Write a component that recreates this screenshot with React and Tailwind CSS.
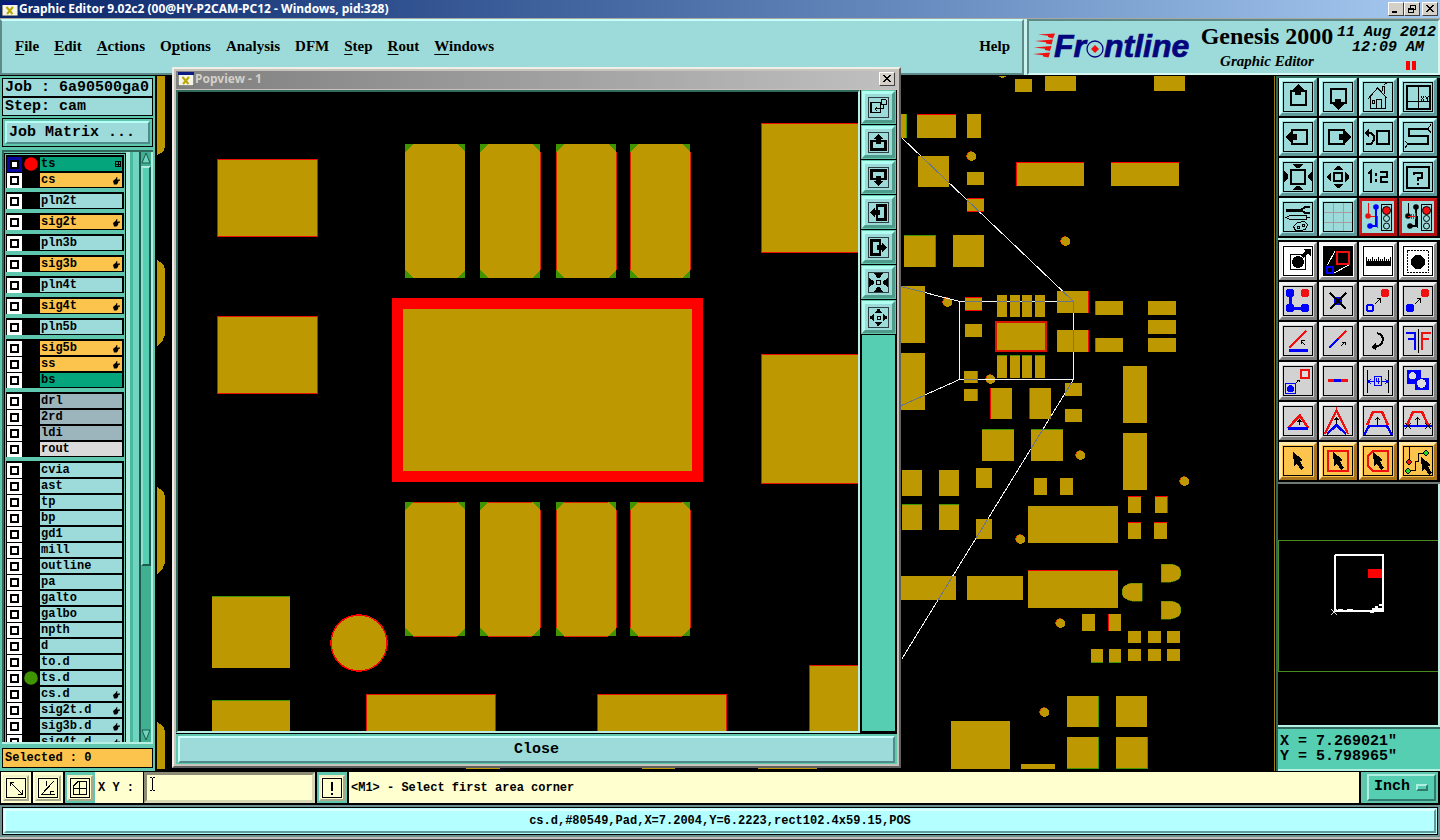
import React from "react";

const MONO = "font-['Liberation_Mono',monospace]";
const SERIF = "font-['Liberation_Serif',serif]";
const GOLD = "#bd9800";
const RED = "#ff0000";
const GREEN = "#3f9400";

/* ---------- board drawing ---------- */

// x1, y1, x2, y2, edges drawn in red, edges drawn in green
const PADS = [
  [895, 114, 907, 138, "", "r"], [917, 114, 956, 138, "t"], [967, 114, 981, 138],
  [1015, 79, 1032, 92], [1045, 76, 1076, 91], [1154, 76, 1185, 91],
  [918, 156, 949, 187], [967, 172, 984, 185], [967, 198, 984, 212, "tb"],
  [1016, 162, 1084, 186, "tl"], [1111, 162, 1179, 186, "t"],
  [904, 235, 936, 267, "", "tr"], [953, 235, 984, 267],
  [895, 286, 925, 343], [895, 353, 925, 410],
  [965, 297, 982, 311, "tb"], [965, 324, 982, 337],
  [997, 295, 1007, 317], [1010, 295, 1020, 317], [1022, 295, 1032, 317], [1035, 295, 1045, 317],
  [997, 355, 1007, 378, "", "t"], [1010, 355, 1020, 378, "", "t"], [1022, 355, 1032, 378, "", "t"], [1035, 355, 1045, 378, "", "t"],
  [1057, 291, 1089, 313, "r"], [1057, 330, 1089, 352, "r"],
  [1095, 301, 1123, 315, "", "l"], [1095, 338, 1123, 352, "", "l"],
  [1148, 301, 1176, 315], [1148, 320, 1176, 334], [1148, 338, 1176, 352],
  [964, 371, 978, 383, "", "r"], [964, 389, 978, 401, "", "r"],
  [990, 388, 1012, 419, "l"], [1029, 388, 1051, 419, "l"],
  [1123, 366, 1147, 423], [1123, 433, 1147, 490],
  [1065, 383, 1082, 396], [1065, 409, 1082, 422],
  [982, 429, 1014, 461, "", "t"], [1031, 429, 1063, 461, "", "t"],
  [902, 470, 922, 496], [939, 470, 959, 496], [902, 504, 922, 530, "", "t"], [939, 504, 959, 530, "", "t"],
  [976, 468, 992, 488], [976, 519, 992, 539],
  [1034, 478, 1047, 495], [1060, 478, 1073, 495],
  [1028, 506, 1118, 543], [1028, 570, 1118, 608, "t"],
  [1128, 496, 1141, 513, "t"], [1155, 496, 1168, 513, "tr"], [1128, 522, 1141, 539, "t"], [1154, 522, 1167, 539, "t"],
  [895, 576, 956, 600], [967, 576, 1023, 600],
  [1082, 614, 1095, 631], [1108, 614, 1121, 631, "l"],
  [1128, 631, 1141, 643], [1148, 631, 1161, 643], [1167, 631, 1180, 643],
  [1128, 649, 1141, 661], [1148, 649, 1161, 661], [1167, 649, 1180, 661],
  [1091, 649, 1103, 663, "", "b"], [1109, 649, 1121, 663, "", "b"],
  [1067, 696, 1099, 727, "", "r"], [1116, 696, 1147, 727],
  [1067, 737, 1099, 769, "", "rb"], [1116, 737, 1148, 769, "", "rb"],
  [951, 721, 1010, 769], [1021, 764, 1055, 769],
  [466, 766, 500, 769], [642, 766, 675, 769], [758, 766, 817, 769],
];
const DOTS = [[1002, 73], [971, 156], [1065, 241], [947, 302], [990, 379], [1080, 455], [1184, 481], [1020, 539], [1060, 623], [1044, 712]];

function Edges({ p, sides = "", color }) {
  const [x1, y1, x2, y2] = p;
  return (
    <>
      {sides.includes("t") && <rect x={x1} y={y1} width={x2 - x1} height="1" fill={color} />}
      {sides.includes("b") && <rect x={x1} y={y2 - 1} width={x2 - x1} height="1" fill={color} />}
      {sides.includes("l") && <rect x={x1} y={y1} width="1" height={y2 - y1} fill={color} />}
      {sides.includes("r") && <rect x={x2 - 1} y={y1} width="1" height={y2 - y1} fill={color} />}
    </>
  );
}
function Pad({ p }) {
  return (
    <g>
      <rect x={p[0]} y={p[1]} width={p[2] - p[0]} height={p[3] - p[1]} fill={GOLD} />
      <Edges p={p} sides={p[4]} color={RED} />
      <Edges p={p} sides={p[5]} color={GREEN} />
    </g>
  );
}
function Guides({ color, clip }) {
  return (
    <g stroke={color} fill="none" clipPath={clip}>
      <path d="M901.500 137.500L1073.500 301.500M901.500 286.500L959.500 301.500M959.500 379.500L901.500 405.500M1073.500 379.500L901.500 659.500" />
      <rect x="959.500" y="301.500" width="114" height="78" />
    </g>
  );
}

function Board() {
  return (
    <svg className="block h-full w-full bg-black" shapeRendering="crispEdges" aria-label="Board view">
      <g transform="translate(-155,-76)">
        <clipPath id="pads">
          {PADS.map((p, i) => <rect key={i} x={p[0]} y={p[1]} width={p[2] - p[0]} height={p[3] - p[1]} />)}
        </clipPath>
        <path d="M157 76h8v71l-2 5l-6 3zM157 260l6 4l2 5v66l-3 7l-5 4zM157 487l6 4l2 5v67l-3 7l-5 4zM157 722l6 4l2 5v38h-8z" fill={GOLD} />
        {PADS.map((p, i) => <Pad key={i} p={p} />)}
        {DOTS.map(([x, y], i) => (
          <g key={i}>
            <circle cx={x} cy={y} r="4.700" fill="#d84000" />
            <circle cx={x + 0.7} cy={y + 0.3} r="4.500" fill={GOLD} />
          </g>
        ))}
        <rect x="996" y="322" width="50" height="29" fill={GOLD} stroke="#d81400" strokeWidth="2" />
        <path d="M1161 564h10q10 1 10 9q0 8 -10 9h-10zM1161 601h10q10 1 10 9q0 8 -10 9h-10zM1142 583h-10q-10 1 -10 9q0 8 10 9h10z" fill={GOLD} stroke={GREEN} strokeWidth="0.5" />
        <Guides color="#f4f4f4" />
        <Guides color="#68748c" clip="url(#pads)" />
      </g>
    </svg>
  );
}

const TALL_X = [405, 480, 556, 630];
function Chamfer({ x, y, lower }) {
  return (
    <g>
      <rect x={x} y={y} width="60" height="134" fill="#3f9400" />
      <path
        d={`M${x + 8} ${y}h44l8 8v118l-8 8h-44l-8 -8v-118z`}
        fill={GOLD}
      />
      {lower && <path d={`M${x + 8} ${y + 0.5}h44M${x + 8} ${y + 134.5}h44`} stroke="#e02000" />}
      {x > 540 && <path d={`M${x + 0.5} ${y + 8}v118`} stroke="#e02000" />}
      {x > 470 && <path d={`M${x + 60.5} ${y + 8}v118`} stroke="#e02000" />}
    </g>
  );
}
function PopBoard() {
  const outlined = [
    [217, 159, 101, 78], [217, 316, 101, 78], [761, 123, 110, 130], [761, 354, 110, 130],
    [366, 694, 130, 50], [597, 694, 130, 50], [809, 665, 60, 80],
  ];
  return (
    <svg className="block h-full w-full bg-black" shapeRendering="crispEdges" aria-label="Magnified view">
      <g transform="translate(-178,-92)">
        {outlined.map(([x, y, w, h], i) => (
          <g key={i}>
            <rect x={x} y={y} width={w} height={h} fill="#e81000" />
            <rect x={x + 1} y={y + 1} width={w - 2} height={h - 2} fill={GOLD} />
          </g>
        ))}
        {TALL_X.map((x) => <Chamfer key={x} x={x} y={144} />)}
        {TALL_X.map((x) => <Chamfer key={x} x={x} y={502} lower />)}
        <rect x="392" y="298" width="311" height="184" fill={RED} />
        <rect x="403" y="309" width="289" height="162" fill={GOLD} />
        <rect x="212" y="596" width="78" height="72" fill={GOLD} />
        <rect x="212" y="596" width="78" height="1" fill={GREEN} />
        <rect x="212" y="700" width="78" height="40" fill={GOLD} />
        <rect x="212" y="700" width="78" height="1" fill={GREEN} />
        <circle cx="359" cy="643" r="28" fill={GOLD} stroke={RED} strokeWidth="1.500" />
      </g>
    </svg>
  );
}

/* ---------- icons ---------- */

const BLUE = "#0000ff";
const R = "#f01010";
const K = "#000";

function Icon({ size = 30, children, frame = true }) {
  return (
    <svg width={size} height={size} viewBox="0 0 30 30" fill="none" shapeRendering="crispEdges" aria-hidden="true">
      {frame && <rect x="0.500" y="0.500" width="29" height="29" stroke={K} />}
      {children}
    </svg>
  );
}
const arrowUp = <path d="M15 2l6 6h-3v5h-6v-5h-3z" fill={K} />;
const Tri = ({ d }) => <path d={d} fill={K} />;
const cursor = <path d="M10 6L20 14L17 15.500L21 22L18 24L13.800 17.500L11 20z" fill={K} />;
const miniArrow = <path d="M11.500 18.500L17 13M13.500 12.500h4v4" stroke={K} />;

const VIEW_ICONS = [
  ["Pan up", <Icon><rect x="8" y="9" width="15" height="14" stroke={K} strokeWidth="2" />{arrowUp}</Icon>],
  ["Pan down", <Icon><rect x="8" y="7" width="15" height="14" stroke={K} strokeWidth="2" /><Tri d="M15 28l6-6h-3v-5h-6v5h-3z" /></Icon>],
  ["Home", <Icon><path d="M5 17L14.500 6L24 16M7.500 15v11.500h14.500v-12M13.500 26v-9h5v9M9.500 18.500h2v3h-2zM19.500 9v-4.500h2v7M21 3l2-2h1" stroke={K} /></Icon>],
  ["Set XY", <Icon><rect x="4" y="4" width="23" height="23" stroke={K} strokeWidth="2" /><path d="M15.500 4v23M4 19.500h23M18 14.500l3 4M21 14.500l-3 4M22.500 14.500l1.500 2l1.500-2M24 16.500v2" stroke={K} /></Icon>],
  ["Pan left", <Icon><rect x="9" y="8" width="15" height="14" stroke={K} strokeWidth="2" /><Tri d="M2 15l6-6v3h6v6h-6v3z" /></Icon>],
  ["Pan right", <Icon><rect x="6" y="8" width="15" height="14" stroke={K} strokeWidth="2" /><Tri d="M28 15l-6-6v3h-6v6h6v3z" /></Icon>],
  ["Previous view", <Icon><rect x="14" y="9" width="12" height="13" stroke={K} strokeWidth="2" /><path d="M4 11h4l3 3v4l-3 4h-5" stroke={K} strokeWidth="2" /><Tri d="M1 11l5-5v10z" /></Icon>],
  ["Serpentine", <Icon><path d="M25 7h-19v7h19v8h-20" stroke={K} strokeWidth="2" /><path d="M25 6.500l3-4M25 7.500l3 3M5 22l-3-3M5 22l-3 4" stroke={K} /></Icon>],
  ["Zoom in", <Icon><rect x="8" y="8" width="14" height="14" stroke={K} strokeWidth="2" /><Tri d="M9 2h11l-4 4h-3zM9 28h11l-4-4h-3zM1 9v11l4-4v-3zM29 9v11l-4-4v-3z" /></Icon>],
  ["Zoom out", <Icon><rect x="11" y="11" width="8" height="8" stroke={K} strokeWidth="2" /><Tri d="M10 8h10l-4-4h-2zM10 22h10l-4 4h-2zM8 10v10l-4-4v-2zM22 10v10l4-4v-2z" /></Icon>],
  ["Scale 1:2", <Icon><path d="M5 12l3-3v12M13 11v3M13 17v3M17 10h7v5h-6v5h7" stroke={K} strokeWidth="2" /></Icon>],
  ["Help query", <Icon><rect x="4" y="5" width="22" height="21" stroke={K} strokeWidth="2" /><path d="M11 13v-2h8v5h-4v3M15 21v2" stroke={K} strokeWidth="2" /></Icon>],
  ["Tools", <Icon><path d="M3 8h15" stroke={K} strokeWidth="3" /><path d="M27 5h-5l-4 3l4 3h5" stroke={K} strokeWidth="2" /><path d="M3 15.500l4-2h16v4h-16zM23 15.500h4M14.500 20.500l7-1l3 3l-2 5l-5 1l-5 0l-2-4zM14 24h2v2h-2zM19 22h2v2h-2z" stroke={K} /></Icon>],
  ["Grid", <Icon><path d="M10.500 1v28M20.500 1v28M1 10.500h28M1 20.500h28" stroke="#a99aa0" /></Icon>],
];

function Lights({ a, b }) {
  return (
    <>
      <path d="M5.500 1v13h9v12" stroke={a} />
      <path d="M13 5v19h-6" stroke={b} strokeWidth="1.500" />
      <g shapeRendering="auto"><circle cx="5" cy="14" r="2.800" fill={a} /><circle cx="13" cy="5" r="2.800" fill={b} /><circle cx="7" cy="24" r="2.800" fill={b} /></g>
      <rect x="18.500" y="2.500" width="10" height="26" stroke={K} />
      <g shapeRendering="auto"><circle cx="23.500" cy="8.500" r="4" fill={R} stroke={K} /><circle cx="23.500" cy="16.500" r="3" stroke={K} /><circle cx="23.500" cy="24" r="3" stroke={K} /></g>
    </>
  );
}
const ALERT_ICONS = [
  ["Net check", <Icon frame={false}><Lights a={R} b={BLUE} /></Icon>],
  ["Spacing check", <Icon frame={false}><Lights a={K} b={K} /><path d="M5 14.500h8M8.500 12v5M10.500 12v5M12.500 11v6" stroke={R} /></Icon>],
];

const WHITE_ICONS = [
  ["Move origin", <Icon><rect x="7.500" y="8.500" width="15" height="15" stroke={K} /><circle cx="15" cy="16" r="6" fill={K} /><path d="M19 11l6-6" stroke={K} strokeWidth="3" /><Tri d="M20 3h8v8z" /></Icon>],
  ["Popview", <Icon frame={false}><rect width="30" height="30" fill={K} /><rect x="14" y="6" width="12" height="12" stroke={R} strokeWidth="2" /><rect x="4" y="21" width="6" height="6" stroke={BLUE} strokeWidth="2" /><path d="M4.500 19L12 5M11 27L26 19" stroke="#fff" /></Icon>],
  ["Measure", <Icon><Tri d="M3 15h25v5h-25z" /><path d="M3.500 11v5M5.500 13v3M7.500 13v3M9.500 11v5M11.500 13v3M13.500 13v3M15.500 11v5M17.500 13v3M19.500 13v3M21.500 11v5M23.500 13v3M25.500 13v3M27.500 11v5" stroke={K} /></Icon>],
  ["Select area", <Icon><rect x="4.500" y="4.500" width="21" height="22" stroke={K} strokeDasharray="2 1" /><circle cx="15" cy="16" r="7" fill={K} /></Icon>],
];

const trapezoid = <path d="M4 19L10 6H19L25 19" stroke={R} strokeWidth="2.500" />;
const upMini = <path d="M14.500 19v-7M12 14l2.500-2.500L17 14" stroke={K} />;
const EDIT_ICONS = [
  ["Add net", <Icon><path d="M7 7v15h15" stroke={BLUE} strokeWidth="3" /><g fill={BLUE}><circle cx="7" cy="7" r="4.500" /><circle cx="7" cy="22" r="4.500" /><circle cx="22" cy="22" r="4.500" /></g><circle cx="22" cy="7" r="4.500" fill={R} /></Icon>],
  ["Delete", <Icon><circle cx="15" cy="15" r="4.500" fill={BLUE} /><path d="M7 7l16 16M23 7L7 23" stroke={K} strokeWidth="1.500" /></Icon>],
  ["Move", <Icon><circle cx="7" cy="22" r="3.500" stroke={BLUE} strokeWidth="2" /><circle cx="22" cy="7" r="4.500" fill={R} />{miniArrow}</Icon>],
  ["Copy", <Icon><circle cx="7" cy="22" r="4.500" fill={BLUE} /><circle cx="22" cy="7" r="4.500" fill={R} />{miniArrow}</Icon>],
  ["Rotate line", <Icon><path d="M6 22L23 5" stroke={R} strokeWidth="2.500" /><path d="M6 24h19" stroke={BLUE} strokeWidth="3" /><path d="M22 19l-4-4M18.500 18v-3.500h3.500" stroke={K} /></Icon>],
  ["Extend line", <Icon><path d="M6 22L15 13" stroke={BLUE} strokeWidth="2.500" /><path d="M15 13L23 5" stroke={R} strokeWidth="2.500" /><path d="M18 20l4-4M18.500 16h3.500v3" stroke={K} /></Icon>],
  ["Rotate", <Icon><path d="M14 7q7 2 5.500 8q-1 5-8 6" stroke={K} strokeWidth="2" /><Tri d="M8 21l5-4v7z" /></Icon>],
  ["Mirror", <Icon><path d="M3 7h9v17M5 13h7" stroke={BLUE} strokeWidth="2.500" /><path d="M15.500 3v24" stroke={K} /><path d="M28 7h-9v17M26 13h-7" stroke={R} strokeWidth="2.500" /></Icon>],
  ["Substitute", <Icon><rect x="2.500" y="17.500" width="10" height="10" stroke={BLUE} /><circle cx="7.500" cy="22.500" r="3.500" fill={BLUE} /><rect x="17" y="3" width="10" height="10" fill={R} /><circle cx="22" cy="8" r="3.500" fill="#ddd" /><path d="M13 17l3-3M14 14h2v2" stroke={K} /></Icon>],
  ["Break line", <Icon><path d="M5 14.500h20" stroke={R} strokeWidth="3" /><path d="M11 14.500h7" stroke={BLUE} strokeWidth="3" /></Icon>],
  ["Stretch", <Icon><path d="M4.500 4v23M25.500 4v23" stroke={K} /><path d="M5 15.500h6M19 15.500h6M8 13l-3 2.500l3 2.500M22 13l3 2.500l-3 2.500M11.500 10.500h7v9h-7zM13.500 12v3h3M15.500 12v6" stroke={BLUE} /></Icon>],
  ["Merge", <Icon><rect x="4" y="4" width="14" height="14" fill={BLUE} /><rect x="12" y="12" width="14" height="12" fill={BLUE} /><circle cx="9.500" cy="9.500" r="3.500" fill="#ddd" /><circle cx="18.500" cy="17.500" r="4.500" fill="#ddd" /></Icon>],
  ["Triangle", <Icon><path d="M5 22L17 9.500L25 22" stroke={R} strokeWidth="2.500" /><path d="M5 22.500h20" stroke={BLUE} strokeWidth="3" /><path d="M16.500 19v-5M14.500 16l2-2l2 2" stroke={K} /></Icon>],
  ["Chevron", <Icon><path d="M2 28L13.500 4L25 28" stroke={R} strokeWidth="2.200" /><path d="M4 28L13.500 19L23 28" stroke={BLUE} strokeWidth="2.500" /><path d="M13.500 18v-6M11.500 14l2-2l2 2" stroke={K} /></Icon>],
  ["Trapezoid", <Icon><path d="M1 29L6 20H24L29 29" stroke={BLUE} strokeWidth="2.500" />{trapezoid}{upMini}</Icon>],
  ["Trapezoid cut", <Icon><path d="M1 20h28" stroke={BLUE} strokeWidth="2.500" />{trapezoid}{upMini}<path d="M2 17l6 6M8 17l-6 6M22 17l6 6M28 17l-6 6" stroke={K} /></Icon>],
];
const SELECT_ICONS = [
  ["Select", <Icon>{cursor}</Icon>],
  ["Select rectangle", <Icon><rect x="5" y="5" width="20" height="20" stroke={R} strokeWidth="2" />{cursor}</Icon>],
  ["Select polygon", <Icon><path d="M10 5h15v20h-15l-5-5v-10z" stroke={R} strokeWidth="2" />{cursor}</Icon>],
  ["Select net", <Icon><path d="M6.500 1v15M6 24.500h6v-9h3v-8h8" stroke={K} /><circle cx="6" cy="16" r="2.300" fill={R} stroke={K} /><circle cx="5" cy="25" r="2.300" fill="#20d820" stroke={K} /><circle cx="23" cy="7" r="2.300" fill="#20d820" stroke={K} /><g transform="translate(8,5)">{cursor}</g></Icon>],
];
const POP_ICONS = [
  ["Link view", <Icon size={21}><rect x="4" y="8" width="14" height="14" stroke={K} strokeWidth="2.500" /><path d="M19 4h7v7h-7zM22.500 11v6h-12M13 14l-3 3l3 3" stroke={K} strokeWidth="1.400" /></Icon>],
  ["Pop pan up", <Icon size={21}><rect x="5" y="13" width="20" height="12" stroke={K} strokeWidth="3" /><Tri d="M15 3l7 7h-3v7h-8v-7h-3z" /></Icon>],
  ["Pop pan down", <Icon size={21}><rect x="5" y="5" width="20" height="12" stroke={K} strokeWidth="3" /><Tri d="M15 27l7-7h-3v-7h-8v7h-3z" /></Icon>],
  ["Pop pan left", <Icon size={21}><rect x="13" y="5" width="12" height="20" stroke={K} strokeWidth="3" /><Tri d="M3 15l7-7v3h7v8h-7v3z" /></Icon>],
  ["Pop pan right", <Icon size={21}><rect x="5" y="5" width="12" height="20" stroke={K} strokeWidth="3" /><Tri d="M27 15l-7-7v3h-7v8h7v3z" /></Icon>],
  ["Pop zoom in", <Icon size={21}><rect x="12" y="12" width="6" height="6" stroke={K} strokeWidth="2.500" /><Tri d="M9 2h12l-4 6h-4zM9 28h12l-4-6h-4zM2 9v12l6-4v-4zM28 9v12l-6-4v-4z" /></Icon>],
  ["Pop zoom out", <Icon size={21}><rect x="13" y="13" width="5" height="5" stroke={K} strokeWidth="1.500" /><Tri d="M10 8h10l-4-5h-2zM10 22h10l-4 5h-2zM8 10v10l-5-4v-2zM22 10v10l5-4v-2z" /></Icon>],
];

const TONES = {
  teal: "bg-[#9cdbda] border-t-[#c8fffb] border-l-[#c8fffb] border-r-[#5e9b9a] border-b-[#5e9b9a]",
  alert: "bg-[#9cdbda] border-t-[#d01818] border-l-[#d01818] border-r-[#b01010] border-b-[#b01010]",
  white: "bg-white border-t-[#f4f4f4] border-l-[#f4f4f4] border-r-[#8a8a8a] border-b-[#8a8a8a]",
  gray: "bg-[#d2d2d2] border-t-[#f2f2f2] border-l-[#f2f2f2] border-r-[#808080] border-b-[#808080]",
  orange: "bg-[#fcc44c] border-t-[#ffe8a8] border-l-[#ffe8a8] border-r-[#a8741c] border-b-[#a8741c]",
};
function Tool({ label, tone, children }) {
  return (
    <button type="button" aria-label={label} className={`flex size-[38px] items-center justify-center border-[3px] ${TONES[tone]}`}>
      {children}
    </button>
  );
}
const tools = (list, tone) => list.map(([label, icon]) => <Tool key={label} label={label} tone={tone}>{icon}</Tool>);

function WindowIcon() {
  return (
    <svg width="16" height="14" viewBox="0 0 16 14" aria-hidden="true">
      <rect width="16" height="14" fill="#f4f4e8" stroke="#333" />
      <rect width="16" height="3" fill="#0a1a80" />
      <path d="M4.500 5l6 7M11 5l-6 7" stroke="#b8a800" strokeWidth="2" />
    </svg>
  );
}
function WinButton({ label, children }) {
  return (
    <button type="button" aria-label={label} className="flex h-[14px] w-4 items-center justify-center border border-t-white border-l-white border-r-[#404040] border-b-[#404040] bg-[#d4d0c8]">
      <svg width="10" height="10" viewBox="0 0 10 10" fill="none" stroke="#000" shapeRendering="crispEdges">{children}</svg>
    </button>
  );
}

/* ---------- header ---------- */

const MENUS = [["", "F", "ile"], ["", "E", "dit"], ["", "A", "ctions"], ["O", "p", "tions"], ["Analysis", "", ""], ["DFM", "", ""], ["", "S", "tep"], ["", "R", "out"], ["", "W", "indows"]];

function Logo() {
  return (
    <svg width="164" height="34" viewBox="0 0 164 34" role="img" aria-label="Frontline" className="shrink-0">
      <g fill={R}>
        <path d="M5 4.500L22 3.500L20 8.500L15 7V5.800zM2 11L20 9.500L18.500 14.500L13 13.500V12.300zM1 17.500L18.500 16L17 21L12 20V18.800zM0 24L17 22.500L15.500 27.500L10 26.500V25.300z" />
      </g>
      <g fill="#05057e" stroke="#05057e" strokeWidth="0.700" className="font-['Liberation_Sans',sans-serif] text-[32px] font-bold italic">
        <text x="21" y="27">Fr</text>
        <text x="71" y="27">ntline</text>
      </g>
      <circle cx="62" cy="19" r="8" fill="none" stroke="#05057e" strokeWidth="1.300" />
      <path d="M62 15l4 4l-4 4l-4-4z" fill={R} />
    </svg>
  );
}

function Header() {
  return (
    <header className="flex h-[56px] shrink-0 gap-[3px] bg-[#c8f4f0]">
      <nav className={`flex flex-1 items-center gap-[15px] border-2 border-t-[#c8fffb] border-l-[#5e8b8a] border-r-[#5e8b8a] border-b-[#5e8b8a] bg-[#9cdbda] pr-3 pb-0.5 pl-[13px] text-[15px] font-bold ${SERIF}`}>
        {MENUS.map(([a, b, c]) => (
          <button type="button" key={a + b + c} className="whitespace-nowrap underline-offset-[3px]">
            {a}<span className="underline">{b}</span>{c}
          </button>
        ))}
        <button type="button" className="ml-auto">Help</button>
      </nav>
      <div className="flex w-[413px] shrink-0 items-center justify-between border-2 border-t-[#5e8b8a] border-l-[#5e8b8a] border-r-[#d8f8f4] border-b-[#d8f8f4] bg-[#9cdbda] pr-0.5 pl-1">
        <Logo />
        <div className={`flex flex-col items-center font-bold whitespace-nowrap ${SERIF}`}>
          <h1 className="text-2xl leading-7">Genesis 2000</h1>
          <p className="text-[15px] leading-[22px] italic">Graphic Editor</p>
        </div>
        <div className={`flex flex-col items-end self-start pt-1 text-[15px] leading-[15px] font-bold italic whitespace-nowrap ${MONO}`}>
          <time>11 Aug 2012</time>
          <span className="pr-3">12:09 AM</span>
          <svg width="10" height="9" className="mt-1.5 mr-5" aria-hidden="true"><path d="M0 0h4v9h-4zM6 0h4v9h-4z" fill={RED} /></svg>
        </div>
      </div>
    </header>
  );
}

/* ---------- layer list ---------- */

const LAYER_BG = {
  green: "bg-[#04a47c]", orange: "bg-[#fcc44c]", blue: "bg-[#9cdbda]", slate: "bg-[#9cb4bc]", light: "bg-[#dadada]",
};
const GROUPS = [
  [["ts", "green", "grid", "red"], ["cs", "orange", "hand"]],
  [["pln2t", "blue"]], [["sig2t", "orange", "hand"]],
  [["pln3b", "blue"]], [["sig3b", "orange", "hand"]],
  [["pln4t", "blue"]], [["sig4t", "orange", "hand"]],
  [["pln5b", "blue"]],
  [["sig5b", "orange", "hand"], ["ss", "orange", "hand"], ["bs", "green"]],
  [["drl", "slate"], ["2rd", "slate"], ["ldi", "slate"], ["rout", "light"]],
  [["cvia", "blue"], ["ast", "blue"], ["tp", "blue"], ["bp", "blue"], ["gd1", "blue"], ["mill", "blue"], ["outline", "blue"], ["pa", "blue"], ["galto", "blue"], ["galbo", "blue"], ["npth", "blue"], ["d", "blue"], ["to.d", "blue"], ["ts.d", "blue", "", "green"], ["cs.d", "blue", "hand"], ["sig2t.d", "blue", "hand"], ["sig3b.d", "blue", "hand"], ["sig4t.d", "blue", "hand"]],
];

function Layer({ name, tone, mark, dot }) {
  return (
    <li className="flex h-4 items-center bg-black pr-0.5 pl-px">
      <input
        type="checkbox"
        aria-label={name}
        className={`size-[15px] appearance-none border-[3px] bg-white shadow-[inset_0_0_0_2px_#000] ${name === "ts" ? "border-[#0808a0]" : "border-white"}`}
      />
      <span className="flex w-[18px] justify-center">
        {dot && (
          <svg width="14" height="14" aria-hidden="true"><circle cx="7" cy="7" r="6.800" fill={dot === "red" ? RED : GREEN} /></svg>
        )}
      </span>
      <button type="button" className={`flex h-[14px] min-w-0 flex-1 items-center justify-between px-px text-[12px] leading-[14px] font-bold ${MONO} ${LAYER_BG[tone]}`}>
        {name}
        {mark === "hand" && (
          <svg width="9" height="9" viewBox="0 0 9 9" aria-hidden="true"><path d="M1 5L4 2.500L4.500 1L5.500 1.500L5 3.500H8V4.800H6.500L6 7L4.500 8.500H2z" fill={K} /></svg>
        )}
        {mark === "grid" && (
          <svg width="6" height="6" viewBox="0 0 6 6" shapeRendering="crispEdges" aria-hidden="true"><path d="M0.500 0.500h5v5h-5zM3 0v6M0 3h6" fill="none" stroke={K} /></svg>
        )}
      </button>
    </li>
  );
}

function Sidebar() {
  return (
    <aside className={`flex w-[155px] shrink-0 flex-col bg-[#5fc7ae] p-0.5 pb-[3px] font-bold ${MONO}`}>
      <div className="border border-black bg-[#9cdbda] px-0.5 text-[15px] leading-[17px] whitespace-nowrap">Job : 6a90500ga0</div>
      <div className="border border-black bg-[#9cdbda] px-0.5 text-[15px] leading-[17px] whitespace-nowrap">Step: cam</div>
      <div className="mt-0.5 border border-black p-0.5">
        <button type="button" className="block w-full border-2 border-t-[#b8fff8] border-l-[#b8fff8] border-r-[#4e8b8a] border-b-[#4e8b8a] bg-[#9cdbda] px-0.5 text-left text-[15px] leading-[19px] font-bold">Job Matrix ...</button>
      </div>
      <div className="mt-[3px] flex min-h-0 flex-1 border-t-2 border-b-2 border-t-[#2f6a5c] border-b-[#b8f0e4]">
        <div className="flex min-h-0 flex-1 border-l-2 border-[#2f6a5c]">
          <ul className="mt-px flex flex-1 flex-col gap-1 overflow-hidden border border-b-0 border-black p-px">
            {GROUPS.map((group, i) => (
              <li key={i} className="shrink-0">
                <ul className="border-t border-black">
                  {group.map(([name, tone, mark, dot]) => <Layer key={name} name={name} tone={tone} mark={mark} dot={dot} />)}
                </ul>
              </li>
            ))}
          </ul>
        </div>
        <div className="w-[13px] border-r-[6px] border-l-4 border-r-[#70d4be] border-l-[#b0ece0] bg-[#4ab89c]" />
        <div className="flex w-[14px] flex-col border-r-2 border-l-2 border-r-[#b0ece0] border-l-[#1f5a50] bg-[#40b090]">
          <svg width="10" height="14" viewBox="0 0 10 14" aria-hidden="true"><path d="M5 1L9 11H1z" fill="#70d4be" stroke="#1f5a50" /></svg>
          <div className="h-[400px] border-2 border-t-[#b0ece0] border-l-[#90e0d0] border-r-[#1f5a50] border-b-[#1f5a50] bg-[#55ceb2]" />
          <svg width="10" height="14" viewBox="0 0 10 14" className="mt-auto" aria-hidden="true"><path d="M5 12L9 2H1z" fill="#70d4be" stroke="#1f5a50" /></svg>
        </div>
      </div>
      <div className="mt-1 border border-black bg-[#fcc44c] px-0.5 text-[12px] leading-[18px]">Selected : 0</div>
    </aside>
  );
}

/* ---------- right panel ---------- */

function RightPanel() {
  return (
    <aside className="flex w-[166px] shrink-0 flex-col border-l border-l-[#a07c10] bg-black pl-px">
      <div className="flex flex-1 flex-col border-l-2 border-[#2f6a5c]">
        <div className="grid grid-cols-[repeat(4,38px)] gap-0.5 border-t-2 border-b-2 border-t-[#2f6a5c] border-b-[#b8f0e4] pb-0.5 pl-px">
          {tools(VIEW_ICONS, "teal")}
          {tools(ALERT_ICONS, "alert")}
        </div>
        <div className="grid grid-cols-[repeat(4,38px)] gap-0.5 border-b-2 border-[#707878] pt-0.5 pb-0.5 pl-px">
          {tools(WHITE_ICONS, "white")}
          {tools(EDIT_ICONS, "gray")}
          {tools(SELECT_ICONS, "orange")}
        </div>
        <div className="min-h-0 flex-1 border-r-2 border-b-2 border-[#b8f0e4]">
          <svg className="block h-full w-full" shapeRendering="crispEdges" aria-label="Board overview">
            <rect x="0.500" y="56.500" width="200" height="131" fill="none" stroke="#4a8c1c" />
            <path d="M57 70.500h48M104.500 70v58M56.500 71v56M57 127h48M57 76v6M57 102v3M57 113v4M60 125.500h5M69 125.500h6M92 128h4M94 124.500h11M97 122.500h3M101 121h4" stroke="#fff" strokeWidth="2" fill="none" />
            <path d="M53 125l6 6M59 125l-6 6" stroke="#ddd" />
            <rect x="90" y="85" width="14" height="9" fill={RED} />
          </svg>
        </div>
        <div className={`border-t-2 border-b-2 border-t-[#2f6a5c] border-b-[#b8f0e4] bg-[#55ceb2] px-0.5 py-[5px] text-[15px] leading-[15px] font-bold ${MONO}`}>
          <p>X = 7.269021"</p>
          <p>Y = 5.798965"</p>
        </div>
      </div>
    </aside>
  );
}

/* ---------- popview ---------- */

function Popview() {
  return (
    <section className="absolute top-[67px] left-[172px] flex h-[701px] w-[729px] flex-col border-2 border-t-[#f0eee8] border-l-[#f0eee8] border-r-[#606060] border-b-[#606060] bg-[#c8c4bc] p-0.5">
      <div className="flex h-[18px] shrink-0 items-center gap-px bg-linear-to-r from-[#808080] to-[#c0c0c0] px-0.5 pb-0.5">
        <WindowIcon />
        <h2 className="flex-1 font-['Noto_Sans',sans-serif] text-[12px] leading-4 font-bold text-[#d4d0c8]">Popview - 1</h2>
        <WinButton label="Close popview"><path d="M2 1l6 7M8 1L2 8" strokeWidth="1.500" /></WinButton>
      </div>
      <div className="mt-px flex min-h-0 flex-1">
        <div className="min-w-0 flex-1 border-2 border-t-[#2f6a5c] border-l-[#2f6a5c] border-r-[#b8f0e4] border-b-[#b8f0e4]">
          <PopBoard />
        </div>
        <div className="flex w-[37px] flex-col items-center gap-px border-2 border-t border-black bg-[#55ceb2]">
          {POP_ICONS.map(([label, icon]) => (
            <div key={label} className="w-full border-b border-black pb-px">
              <button type="button" aria-label={label} className="flex h-8 w-full items-center justify-center border-3 border-t-[#b0fff0] border-l-[#b0fff0] border-r-[#4e9b8a] border-b-[#4e9b8a] bg-[#9cdbda] outline outline-[#5fc7ae]">
                {icon}
              </button>
            </div>
          ))}
        </div>
      </div>
      <div className="border-t border-black bg-[#5fc7ae] p-0.5 pb-px">
        <button type="button" className={`block w-full border-2 border-t-[#c8fffb] border-l-[#c8fffb] border-r-[#4e8b8a] border-b-[#4e8b8a] bg-[#9cdbda] pt-px text-[15px] leading-[22px] ${MONO} font-bold`}>Close</button>
      </div>
    </section>
  );
}

/* ---------- bottom bars ---------- */

function CmdButton({ label, teal, children }) {
  return (
    <button
      type="button"
      aria-label={label}
      className={`flex w-[30px] shrink-0 items-center justify-center ${teal ? "bg-[#5fc7ae]" : "bg-[#ffffd0]"}`}
    >
      <span className="flex size-[26px] items-center justify-center border-2 border-t-[#f0f0c8] border-l-[#f0f0c8] border-r-[#a8a88c] border-b-[#a8a88c] bg-[#ffffd0]">
        <svg width="20" height="20" viewBox="0 0 20 20" fill="none" stroke="#000" shapeRendering="crispEdges" aria-hidden="true">
          <rect x="0.500" y="0.500" width="19" height="19" />
          {children}
        </svg>
      </span>
    </button>
  );
}

function CommandBar() {
  return (
    <div className={`flex h-[34px] shrink-0 gap-0.5 bg-black pt-px pr-0.5 pb-0.5 pl-px text-[12px] font-bold ${MONO}`}>
      <CmdButton label="Relative"><path d="M4 4l12 12M4 8v-4h4M16 12v4h-4" /></CmdButton>
      <CmdButton label="Angle"><path d="M3 17L16 3M3 16.500h14M8 3v5M12 13h4M12 13v3" /></CmdButton>
      <CmdButton label="Snap grid" teal><path d="M3.500 17V8l5-4.500h8V16.500h-13M3 10.500h14M9.500 3v14" strokeWidth="1.500" /></CmdButton>
      <label htmlFor="xy" className="-ml-0.5 flex w-12 items-center bg-[#ffffd0] pl-[3px] whitespace-pre">X Y :</label>
      <input id="xy" className="-ml-px w-[171px] border-[3px] border-t-[#8c8c74] border-l-[#8c8c74] border-r-[#d8d8b4] border-b-[#d8d8b4] bg-[#ffffd0] px-1 outline-none" />
      <CmdButton label="Confirm" teal><path d="M10 4v9M10 15v2" strokeWidth="2" /></CmdButton>
      <output className="flex flex-1 items-center bg-[#ffffd0] pl-0.5">&lt;M1&gt; - Select first area corner</output>
      <div className="flex w-[77px] bg-[#5fc7ae] py-0.5 pr-0.5 pl-1.5">
        <div className="relative flex flex-1 items-center border-2 border-t-[#b0f0e0] border-l-[#b0f0e0] border-r-[#2f7a6c] border-b-[#2f7a6c] bg-[#55ceb2]">
          <select aria-label="Units" className={`w-full appearance-none pl-[5px] text-[15px] font-bold ${MONO}`}>
            <option>Inch</option>
          </select>
          <span className="pointer-events-none absolute right-1.5 h-[7px] w-3 border-2 border-t-[#b0f0e0] border-l-[#b0f0e0] border-r-[#2f7a6c] border-b-[#2f7a6c]" />
        </div>
      </div>
      <svg width="7" height="17" viewBox="0 0 7 17" className="pointer-events-none absolute mt-1 ml-[148px]" fill="none" stroke="#000" shapeRendering="crispEdges" aria-hidden="true"><path d="M1 1.500h2M4 1.500h2M3.500 2v12M1 14.500h2M4 14.500h2" /></svg>
    </div>
  );
}

export default function App() {
  return (
    <div className="relative flex h-screen min-h-[600px] flex-col overflow-hidden bg-black text-black">
      <div className="flex h-[18px] shrink-0 items-center gap-px bg-linear-to-r from-[#0a246a] to-[#a6caf0] px-0.5">
        <WindowIcon />
        <p className="flex-1 font-['Noto_Sans',sans-serif] text-[12px] leading-4 font-bold text-white">Graphic Editor 9.02c2 (00@HY-P2CAM-PC12 - Windows, pid:328)</p>
        <div className="flex">
          <WinButton label="Minimize"><path d="M1 8h5" strokeWidth="2" /></WinButton>
          <WinButton label="Restore"><path d="M3.500 4V1.500h5v4H7M1.500 4.500h5v4h-5zM1 5.500h6" /></WinButton>
          <span className="w-0.5" />
          <WinButton label="Close window"><path d="M2 1l6 7M8 1L2 8" strokeWidth="1.500" /></WinButton>
        </div>
      </div>
      <div className="h-px shrink-0 bg-[#a8a8a0]" />
      <Header />
      <main className="flex min-h-0 flex-1 border-t border-black">
        <Sidebar />
        <div className="min-w-0 flex-1"><Board /></div>
        <RightPanel />
      </main>
      <CommandBar />
      <footer className={`flex h-[32px] shrink-0 border-2 border-[#6f9090] bg-[#b4ffff] text-[12px] font-bold ${MONO}`}>
        <p className="flex-1 border border-black p-px">
          <span className="flex h-full items-center justify-center border-2 border-t-[#e0ffff] border-l-[#e0ffff] border-r-[#5e9b9a] border-b-[#5e9b9a]">cs.d,#80549,Pad,X=7.2004,Y=6.2223,rect102.4x59.15,POS</span>
        </p>
      </footer>
      <div className="h-[3px] shrink-0 border-b border-[#404040] bg-[#c0c0b8]" />
      <Popview />
    </div>
  );
}
